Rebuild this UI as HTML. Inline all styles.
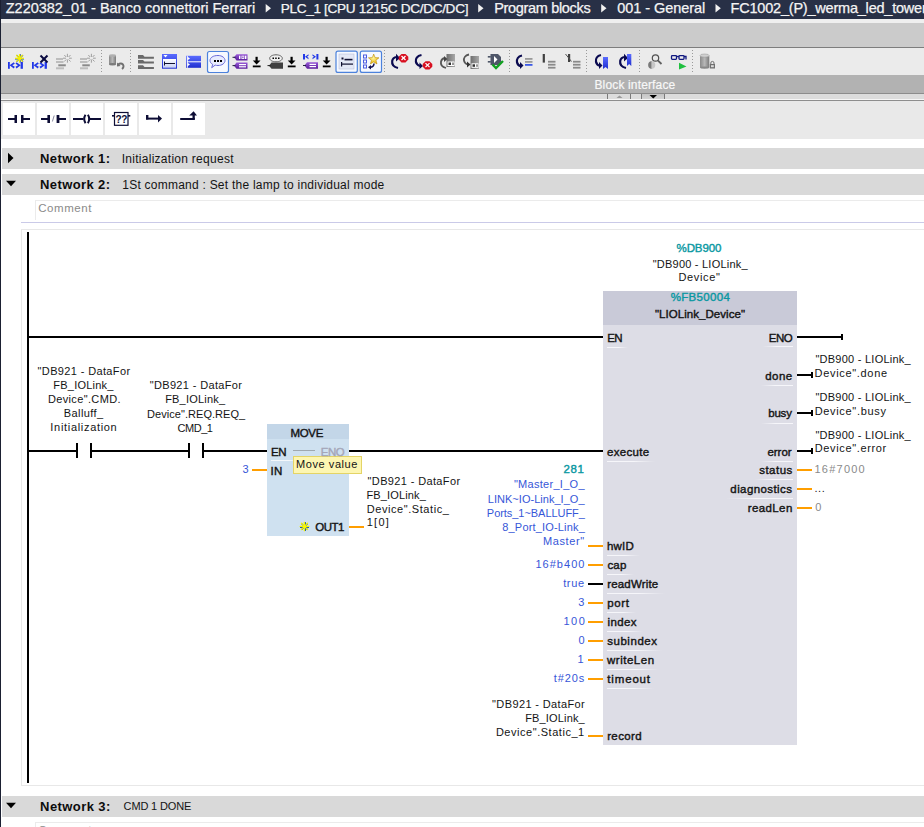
<!DOCTYPE html>
<html><head><meta charset="utf-8"><style>
html,body{margin:0;padding:0;width:924px;height:827px;overflow:hidden;background:#fff;position:relative}
*{box-sizing:border-box}
.t{position:absolute;white-space:pre;font-family:"Liberation Sans", sans-serif;line-height:normal}
.a{position:absolute}
</style></head><body>
<!-- backgrounds -->
<div class=a style="left:0;top:0;width:924px;height:19px;background:#283046"></div>
<div class=a style="left:0;top:19px;width:924px;height:4px;background:#efefef"></div>
<div class=a style="left:0;top:23px;width:924px;height:24px;background:#cbcbcb"></div>
<div class=a style="left:0;top:47px;width:924px;height:1px;background:#7d7d7d"></div>
<div class=a style="left:0;top:48px;width:924px;height:27px;background:#ebebeb"></div>
<div class=a style="left:0;top:75px;width:924px;height:18px;background:#b2b2b2"></div>
<div class=a style="left:0;top:93px;width:924px;height:1px;background:#8c8c8c"></div>
<div class=a style="left:0;top:94px;width:924px;height:5px;background:#dcdcdc"></div>
<div class=a style="left:0;top:99px;width:924px;height:1px;background:#f6f6f6"></div>
<div class=a style="left:0;top:100px;width:924px;height:1px;background:#8e8e8e"></div>
<div class=a style="left:0;top:101px;width:924px;height:38px;background:#e9e9e9"></div>
<!-- block interface tabs -->
<div class=a style="left:607px;top:94px;width:1px;height:5px;background:#7a7a7a"></div>
<div class=a style="left:630px;top:94px;width:1px;height:5px;background:#7a7a7a"></div>
<div class=a style="left:641px;top:94px;width:1px;height:5px;background:#7a7a7a"></div>
<div class=a style="left:664px;top:94px;width:1px;height:5px;background:#7a7a7a"></div>
<div class=a style="left:642px;top:94px;width:22px;height:5px;background:linear-gradient(#c4c4c4,#d4d4d4)"></div>
<svg class=a style="left:0;top:0" width="924" height="140">
 <polygon points="616.5,98 622.5,98 619.5,95.5" fill="#9a9a9a"/>
 <polygon points="649.5,95 657,95 653.25,98.5" fill="#000"/>
</svg>
<!-- ladder toolbar buttons -->
<div class=a style="left:3px;top:103px;width:32px;height:32px;background:#fff"></div>
<div class=a style="left:37px;top:103px;width:32px;height:32px;background:#fff"></div>
<div class=a style="left:71px;top:103px;width:32px;height:32px;background:#fff"></div>
<div class=a style="left:105px;top:103px;width:32px;height:32px;background:#fff"></div>
<div class=a style="left:139px;top:103px;width:32px;height:32px;background:#fff"></div>
<div class=a style="left:173px;top:103px;width:32px;height:32px;background:#fff"></div>
<!-- left dark border -->
<div class=a style="left:0;top:0;width:1px;height:827px;background:#1b2032"></div>
<!-- network headers -->
<div class=a style="left:2px;top:148px;width:922px;height:21px;background:#d9d9d9"></div>
<div class=a style="left:2px;top:174px;width:922px;height:21px;background:#d9d9d9"></div>
<div class=a style="left:2px;top:796px;width:922px;height:21px;background:#d9d9d9"></div>
<svg class=a style="left:0;top:140px" width="30" height="690">
 <polygon points="8,12.7 13.5,18 8,23.3" fill="#000"/>
 <polygon points="6,40.8 16,40.8 11,46.2" fill="#000"/>
 <polygon points="6,662.8 16,662.8 11,668.2" fill="#000"/>
</svg>
<!-- comment boxes -->
<div class=a style="left:35px;top:200px;width:889px;height:20px;border-left:1px solid #ebebeb;border-top:1px solid #ebebeb"></div>
<div class=a style="left:21px;top:222px;width:903px;height:1px;background:#cacae8"></div>
<div class=a style="left:35px;top:822px;width:889px;height:10px;border-left:1px solid #ebebeb;border-top:1px solid #ebebeb"></div>
<!-- ladder box -->
<div class=a style="left:21px;top:229px;width:910px;height:557px;border:1px solid #e8e8e8"></div>
<div class=a style="left:27px;top:232px;width:2px;height:551px;background:#000"></div>
<div class=a style="left:29px;top:336px;width:574px;height:2px;background:#000;"></div>
<div class=a style="left:29px;top:450px;width:47px;height:2px;background:#000;"></div>
<div class=a style="left:76px;top:443px;width:2px;height:15px;background:#000;"></div>
<div class=a style="left:90px;top:443px;width:2px;height:15px;background:#000;"></div>
<div class=a style="left:92px;top:450px;width:96px;height:2px;background:#000;"></div>
<div class=a style="left:188px;top:443px;width:2px;height:15px;background:#000;"></div>
<div class=a style="left:202px;top:443px;width:2px;height:15px;background:#000;"></div>
<div class=a style="left:204px;top:450px;width:63px;height:2px;background:#000;"></div>
<div class=a style="left:349px;top:450px;width:254px;height:2px;background:#000;"></div>
<div class=a style="left:267px;top:424px;width:82px;height:112px;background:#cfe1f0;"></div>
<div class=a style="left:267px;top:424px;width:82px;height:15px;background:#c3d6e8;"></div>
<div class=a style="left:293px;top:450px;width:22px;height:1px;background:#9ea8b0;"></div>
<div class=a style="left:271px;top:460px;width:30px;height:1px;background:linear-gradient(90deg,#f4f8fb,#f4f8fb 60%,rgba(244,248,251,0));"></div>
<div class=a style="left:252px;top:469px;width:15px;height:2px;background:#ff9e00;"></div>
<div class=a style="left:349px;top:526px;width:15px;height:2px;background:#ff9e00;"></div>
<svg class=a style="left:298px;top:520px" width="13" height="13" viewBox="298 520 13 13">
<g stroke="#0a4a9a" stroke-width="1.3">
<line x1="305.2" y1="522" x2="305.2" y2="531"/><line x1="300" y1="527.2" x2="309" y2="527.2"/>
<line x1="301.6" y1="523.6" x2="307.6" y2="529.6"/><line x1="307.6" y1="523.6" x2="301.6" y2="529.6"/></g>
<g stroke="#f4f400" stroke-width="1.3" stroke-linecap="round">
<line x1="304.4" y1="522.3" x2="304.4" y2="530.7"/><line x1="300.2" y1="526.4" x2="308.8" y2="526.4"/>
<line x1="301.4" y1="523.3" x2="303.5" y2="525.4"/><line x1="307.5" y1="523.3" x2="305.4" y2="525.4"/>
<line x1="301.4" y1="529.5" x2="303.5" y2="527.4"/><line x1="307.5" y1="529.5" x2="305.4" y2="527.4"/></g>
<circle cx="304.5" cy="526.5" r="1.8" fill="#f8f800"/></svg>
<div class=a style="left:293px;top:456px;width:69px;height:18px;background:#fdf6b2;border:1px solid #e4d466"></div>
<div class=a style="left:603px;top:291px;width:194px;height:454px;background:#dddde6;"></div>
<div class=a style="left:603px;top:291px;width:194px;height:34px;background:#c9cad8;"></div>
<div class=a style="left:797px;top:336px;width:46px;height:2px;background:#000;"></div>
<div class=a style="left:841px;top:334px;width:2px;height:6px;background:#000;"></div>
<div class=a style="left:797px;top:374px;width:15px;height:2px;background:#000;"></div>
<div class=a style="left:811px;top:372px;width:2px;height:6px;background:#000;"></div>
<div class=a style="left:797px;top:412px;width:15px;height:2px;background:#000;"></div>
<div class=a style="left:811px;top:410px;width:2px;height:6px;background:#000;"></div>
<div class=a style="left:797px;top:450px;width:15px;height:2px;background:#000;"></div>
<div class=a style="left:811px;top:448px;width:2px;height:6px;background:#000;"></div>
<div class=a style="left:797px;top:469px;width:15px;height:2px;background:#ff9e00;"></div>
<div class=a style="left:797px;top:488px;width:15px;height:2px;background:#ff9e00;"></div>
<div class=a style="left:797px;top:507px;width:15px;height:2px;background:#ff9e00;"></div>
<div class=a style="left:588px;top:545px;width:15px;height:2px;background:#ff9e00;"></div>
<div class=a style="left:588px;top:564px;width:15px;height:2px;background:#ff9e00;"></div>
<div class=a style="left:588px;top:602px;width:15px;height:2px;background:#ff9e00;"></div>
<div class=a style="left:588px;top:621px;width:15px;height:2px;background:#ff9e00;"></div>
<div class=a style="left:588px;top:640px;width:15px;height:2px;background:#ff9e00;"></div>
<div class=a style="left:588px;top:659px;width:15px;height:2px;background:#ff9e00;"></div>
<div class=a style="left:588px;top:678px;width:15px;height:2px;background:#ff9e00;"></div>
<div class=a style="left:588px;top:735px;width:15px;height:2px;background:#ff9e00;"></div>
<div class=a style="left:588px;top:583px;width:15px;height:2px;background:#000;"></div>
<div class=a style="left:607px;top:347px;width:21px;height:1px;background:linear-gradient(90deg,#f6f6fa,#f6f6fa 55%,rgba(246,246,250,0));"></div>
<div class=a style="left:607px;top:461px;width:48px;height:1px;background:linear-gradient(90deg,#f6f6fa,#f6f6fa 55%,rgba(246,246,250,0));"></div>
<div class=a style="left:607px;top:555px;width:33px;height:1px;background:linear-gradient(90deg,#f6f6fa,#f6f6fa 55%,rgba(246,246,250,0));"></div>
<div class=a style="left:607px;top:574px;width:27px;height:1px;background:linear-gradient(90deg,#f6f6fa,#f6f6fa 55%,rgba(246,246,250,0));"></div>
<div class=a style="left:607px;top:593px;width:58px;height:1px;background:linear-gradient(90deg,#f6f6fa,#f6f6fa 55%,rgba(246,246,250,0));"></div>
<div class=a style="left:607px;top:612px;width:29px;height:1px;background:linear-gradient(90deg,#f6f6fa,#f6f6fa 55%,rgba(246,246,250,0));"></div>
<div class=a style="left:607px;top:631px;width:36px;height:1px;background:linear-gradient(90deg,#f6f6fa,#f6f6fa 55%,rgba(246,246,250,0));"></div>
<div class=a style="left:607px;top:650px;width:55px;height:1px;background:linear-gradient(90deg,#f6f6fa,#f6f6fa 55%,rgba(246,246,250,0));"></div>
<div class=a style="left:607px;top:669px;width:52px;height:1px;background:linear-gradient(90deg,#f6f6fa,#f6f6fa 55%,rgba(246,246,250,0));"></div>
<div class=a style="left:607px;top:688px;width:47px;height:1px;background:linear-gradient(90deg,#f6f6fa,#f6f6fa 55%,rgba(246,246,250,0));"></div>
<div class=a style="left:763px;top:346px;width:30px;height:1px;background:linear-gradient(270deg,#f6f6fa,#f6f6fa 55%,rgba(246,246,250,0));"></div>
<div class=a style="left:761px;top:385px;width:32px;height:1px;background:linear-gradient(270deg,#f6f6fa,#f6f6fa 55%,rgba(246,246,250,0));"></div>
<div class=a style="left:761px;top:423px;width:32px;height:1px;background:linear-gradient(270deg,#f6f6fa,#f6f6fa 55%,rgba(246,246,250,0));"></div>
<div class=a style="left:761px;top:461px;width:32px;height:1px;background:linear-gradient(270deg,#f6f6fa,#f6f6fa 55%,rgba(246,246,250,0));"></div>
<div class=a style="left:755px;top:479px;width:38px;height:1px;background:linear-gradient(270deg,#f6f6fa,#f6f6fa 55%,rgba(246,246,250,0));"></div>
<div class=a style="left:726px;top:498px;width:67px;height:1px;background:linear-gradient(270deg,#f6f6fa,#f6f6fa 55%,rgba(246,246,250,0));"></div>
<svg class=a style="left:0;top:0" width="924" height="140" shape-rendering="geometricPrecision">
<defs>
 <linearGradient id="gb" x1="0" y1="0" x2="0" y2="1"><stop offset="0" stop-color="#5a6cff"/><stop offset="1" stop-color="#1f2ed0"/></linearGradient>
 <linearGradient id="gw" x1="0" y1="0" x2="0" y2="1"><stop offset="0" stop-color="#ffffff"/><stop offset="1" stop-color="#c8d0f4"/></linearGradient>
 <linearGradient id="gp" x1="0" y1="0" x2="0" y2="1"><stop offset="0" stop-color="#9a5ad8"/><stop offset="1" stop-color="#5a1c9c"/></linearGradient>
 <linearGradient id="gg" x1="0" y1="0" x2="1" y2="0"><stop offset="0" stop-color="#6e6e6e"/><stop offset="1" stop-color="#a8a8a8"/></linearGradient>
 <linearGradient id="gc" x1="0" y1="0" x2="1" y2="0"><stop offset="0" stop-color="#8a8a8a"/><stop offset=".5" stop-color="#b8b8b8"/><stop offset="1" stop-color="#7a7a7a"/></linearGradient>
 <radialGradient id="gs" cx=".45" cy=".4" r=".6"><stop offset="0" stop-color="#fff8a0"/><stop offset="1" stop-color="#e8b000"/></radialGradient>
</defs>
<!-- title arrows -->
<g fill="#f0f0f0">
 <polygon points="265.7,4 271,8.2 265.7,12.4"/>
 <polygon points="478.2,4 483.5,8.2 478.2,12.4"/>
 <polygon points="601.2,4 606.5,8.2 601.2,12.4"/>
 <polygon points="715.5,4 720.8,8.2 715.5,12.4"/>
</g>
<!-- separators -->
<g stroke="#9a9a9a" stroke-width="1" stroke-dasharray="1,2">
 <line x1="101.5" y1="50" x2="101.5" y2="73"/>
 <line x1="130.5" y1="50" x2="130.5" y2="73"/>
 <line x1="384.5" y1="50" x2="384.5" y2="73"/>
 <line x1="509.5" y1="50" x2="509.5" y2="73"/>
 <line x1="586.5" y1="50" x2="586.5" y2="73"/>
 <line x1="639.5" y1="50" x2="639.5" y2="73"/>
 <line x1="692.5" y1="50" x2="692.5" y2="73"/>
</g>
<!-- icon 1 & 2: network symbol -->
<g id="net" fill="#2238e8">
 <rect x="8" y="62" width="1.8" height="6.8"/><polygon points="9.6,65.3 13.8,62.2 14.8,63.8 12.3,65.3 14.8,66.8 13.8,68.4"/>
 <polygon points="20.7,65.3 16.5,62.2 15.5,63.8 18,65.3 15.5,66.8 16.5,68.4"/><rect x="20.6" y="62" width="2.3" height="6.8"/>
</g>
<use href="#net" x="24"/>
<g stroke="#1a4a9a" stroke-width="1.2"><line x1="20.1" y1="54" x2="20.1" y2="62.5"/><line x1="15" y1="58.9" x2="24" y2="58.9"/><line x1="16.6" y1="55.2" x2="23" y2="61.6"/><line x1="23" y1="55.2" x2="16.6" y2="61.6"/></g>
<g stroke="#f4f000" stroke-width="1.2"><line x1="19.5" y1="54" x2="19.5" y2="62.5"/><line x1="15" y1="58.3" x2="24" y2="58.3"/><line x1="16.3" y1="55" x2="18.3" y2="57"/><line x1="22.7" y1="55" x2="20.7" y2="57"/><line x1="16.3" y1="61.6" x2="18.3" y2="59.6"/><line x1="22.7" y1="61.6" x2="20.7" y2="59.6"/></g>
<circle cx="19.5" cy="58.3" r="2" fill="#f4f000"/>
<g stroke="#0a0a40" stroke-width="2"><line x1="40.5" y1="55.5" x2="47.5" y2="62.5"/><line x1="47.5" y1="55.5" x2="40.5" y2="62.5"/></g>
<!-- icon 3 & 4: gray bars + star -->
<g id="ic3">
 <rect x="56" y="58" width="7" height="2" fill="#bdbdbd"/><rect x="56" y="61" width="7.5" height="2" fill="#bdbdbd"/>
 <rect x="58.3" y="64.3" width="7.5" height="2" fill="#8a8a8a"/><rect x="56" y="67.3" width="8" height="2" fill="#bdbdbd"/>
 <g stroke="#a0a0a0" stroke-width="1"><line x1="67.4" y1="53.8" x2="67.4" y2="57"/><line x1="67.4" y1="59.5" x2="67.4" y2="62.7"/><line x1="63" y1="58.2" x2="66" y2="58.2"/><line x1="69" y1="58.2" x2="71.8" y2="58.2"/><line x1="64.3" y1="55" x2="66.2" y2="57"/><line x1="70.5" y1="55" x2="68.6" y2="57"/><line x1="64.3" y1="61.5" x2="66.2" y2="59.5"/><line x1="70.5" y1="61.5" x2="68.6" y2="59.5"/></g>
</g>
<use href="#ic3" x="24"/>
<!-- icon 5: cylinder + undo -->
<rect x="109" y="55.5" width="7" height="9" rx="1" fill="url(#gc)"/><ellipse cx="112.5" cy="55.6" rx="3.5" ry="1.4" fill="#b0b0b0"/><ellipse cx="112.5" cy="64.2" rx="3.5" ry="1.2" fill="#7a7a7a"/>
<path d="M118,64.5 Q121,62.5 123,64.5 Q124.5,67 122,69" stroke="#707070" stroke-width="1.8" fill="none"/><polygon points="117,62.5 117,66.5 120.5,66" fill="#707070"/>
<!-- icon 6: stacked tabs -->
<g fill="#6a6a6a">
 <path d="M138,55 h5 l1.5,1.7 h9.4 v2 h-15.9z"/><path d="M138,60.1 h5 l1.5,1.5 h9.4 v1.8 h-15.9z"/><path d="M138,65.2 h5 l1.5,1.7 h9.4 v2 h-15.9z"/>
</g>
<!-- icon 7: blue window -->
<rect x="162" y="54" width="15" height="14.7" fill="url(#gb)"/><rect x="163" y="59" width="13" height="8.7" fill="url(#gw)"/>
<polygon points="163.5,55 167.5,55 165.5,57.5" fill="#fff"/><rect x="164" y="63" width="11" height="1" fill="#101030"/><rect x="164" y="61.5" width="1" height="4" fill="#101030"/>
<!-- icon 8: blue bar -->
<rect x="186" y="55.8" width="15" height="12" fill="url(#gb)"/><rect x="187" y="61.3" width="14" height="1" fill="#ffffff"/>
<rect x="186.8" y="55.8" width="1" height="12" fill="#fff"/><polygon points="187.5,56.8 190,58.6 187.5,60.3" fill="#fff"/><polygon points="187.5,62.8 190,64.6 187.5,66.3" fill="#fff"/>
<!-- icon 9: framed speech -->
<rect x="207.5" y="51.5" width="21" height="21" rx="2" fill="#f6f9ff" stroke="#4c82dc" stroke-width="1.2"/>
<path d="M218,55.5 c4,0 7,2.2 7,5 c0,2.8 -3,5 -7,5 c-1,0 -2,-.1 -2.8,-.4 l-3.5,2.6 l1,-3.3 c-1.7,-.9 -2.7,-2.3 -2.7,-3.9 c0,-2.8 3,-5 8,-5z" fill="#e8ecff" stroke="#6a6ad8" stroke-width="1"/>
<g fill="#000"><rect x="214" y="60" width="2" height="2"/><rect x="217" y="60" width="2" height="2"/><rect x="220" y="60" width="2" height="2"/></g>
<!-- icon 10: purple tags -->
<g>
 <path d="M236.5,54.2 h11 v6.3 h-11 l-2.5,-3.15z" fill="url(#gp)"/><rect x="232.5" y="56.8" width="3" height="1" fill="#202040"/>
 <path d="M236.5,62.5 h11 v6.3 h-11 l-2.5,-3.15z" fill="url(#gp)"/><rect x="232.5" y="65.1" width="3" height="1" fill="#202040"/>
 <rect x="239" y="55.7" width="1.4" height="3.3" fill="#fff"/><rect x="241.5" y="55.7" width="2.8" height="3.3" fill="#fff"/><rect x="242.3" y="56.5" width="1.2" height="1.7" fill="#7a3cc0"/><rect x="245" y="55.7" width="1.4" height="3.3" fill="#fff"/>
 <rect x="239" y="64" width="7" height="1.2" fill="#fff"/><rect x="239" y="66.2" width="7" height="1.2" fill="#fff"/>
</g>
<g id="dl" fill="#000"><rect x="255.5" y="56.8" width="2.2" height="5"/><polygon points="252.8,60.5 260.5,60.5 256.6,64.5"/><rect x="252.8" y="65.5" width="7.8" height="1.8"/></g>
<!-- icon 11: speech + dark tag -->
<path d="M276,54.8 c3.5,0 6.3,1.5 6.3,3.5 c0,2 -2.8,3.5 -6.3,3.5 c-3.5,0 -6.3,-1.5 -6.3,-3.5 c0,-2 2.8,-3.5 6.3,-3.5z" fill="#f0f0f0" stroke="#606060" stroke-width="1"/>
<g fill="#000"><rect x="272.5" y="57.5" width="1.5" height="1.5"/><rect x="275.2" y="57.5" width="1.5" height="1.5"/><rect x="278" y="57.5" width="1.5" height="1.5"/></g>
<path d="M271.5,62.5 h11.5 v6.3 h-11.5 l-2.5,-3.15z" fill="#404040"/><rect x="267.5" y="65.1" width="3" height="1" fill="#202020"/>
<use href="#dl" x="35"/>
<!-- icon 12: net + purple tag -->
<g fill="#2238e8"><rect x="303" y="54" width="2" height="5.5"/><polygon points="305,56.8 308.5,54.3 308.5,55.8 307,56.8 308.5,57.8 308.5,59.3"/><polygon points="312.5,54.3 316,56.8 312.5,59.3 312.5,57.8 314,56.8 312.5,55.8"/><rect x="316.4" y="54" width="2" height="5.5"/></g>
<path d="M307,62.2 h11 v6.6 h-11 l-2.5,-3.3z" fill="url(#gp)"/><rect x="303" y="65" width="3" height="1" fill="#202040"/><rect x="309.5" y="63.8" width="6.5" height="1.2" fill="#fff"/><rect x="309.5" y="66" width="6.5" height="1.2" fill="#fff"/>
<use href="#dl" x="70"/>
<!-- icon 13: framed list -->
<rect x="336" y="51.2" width="21.3" height="21.2" rx="2" fill="#f6f9ff" stroke="#4c82dc" stroke-width="1.2"/>
<rect x="339" y="54" width="15" height="15" fill="#e4e8f6" stroke="#b8c0dc" stroke-width=".6"/>
<rect x="341.5" y="57.5" width="2" height="2" fill="#101030"/><rect x="344.5" y="58.8" width="8" height="1.6" fill="#101030"/>
<rect x="341" y="63.5" width="12" height="1.2" fill="#101030"/><rect x="341" y="62" width="1.2" height="4.5" fill="#101030"/>
<!-- icon 14: framed star list -->
<rect x="360.3" y="51.2" width="21.2" height="21.2" rx="2" fill="#f6f9ff" stroke="#4c82dc" stroke-width="1.2"/>
<g fill="none" stroke="#4a5ae0" stroke-width="1"><rect x="363.5" y="55" width="3" height="3"/><rect x="363.5" y="60" width="3" height="3"/><rect x="363.5" y="65" width="3" height="3"/></g>
<polygon points="373.7,54 375.1,57.6 379,57.8 376,60.2 377,64 373.7,61.9 370.4,64 371.4,60.2 368.4,57.8 372.3,57.6" fill="url(#gs)" stroke="#b08000" stroke-width=".5"/>
<path d="M374,63.5 q0,3.5 -4,3.8" stroke="#101050" stroke-width="1.5" fill="none"/><polygon points="368,67.3 371,65 371,69.5" fill="#101050"/>
<!-- icon 15/16: navy arcs + red octagon -->
<path d="M398,68 c-4.5,-1 -6.2,-4 -5.8,-7 c.4,-2.5 2.5,-3.8 4.5,-4" stroke="#0a0a50" stroke-width="2.2" fill="none"/><polygon points="396,53.8 400,58 396,61.5" fill="#0a0a50"/>
<path d="M401.5,54 h4 l2.8,2.8 v2.8 l-2.8,2.8 h-4 l-2.8,-2.8 v-2.8z" fill="#d81020"/><g stroke="#fff" stroke-width="1.2"><line x1="401.5" y1="56" x2="405.5" y2="60"/><line x1="405.5" y1="56" x2="401.5" y2="60"/></g>
<path d="M421.5,55 c-4.5,.8 -6.2,4 -5.6,6.8 c.4,2 2,3.5 4.2,4.2" stroke="#0a0a50" stroke-width="2.2" fill="none"/><polygon points="419.5,62.5 423,66 419.5,69" fill="#0a0a50"/>
<path d="M425.5,61.2 h4 l2.8,2.8 v2.8 l-2.8,2.8 h-4 l-2.8,-2.8 v-2.8z" fill="#d81020"/><g stroke="#fff" stroke-width="1.2"><line x1="425.5" y1="63.2" x2="429.5" y2="67.2"/><line x1="429.5" y1="63.2" x2="425.5" y2="67.2"/></g>
<!-- icon 17/18: gray arc + chip -->
<rect x="446.5" y="54" width="8.5" height="13" fill="url(#gg)"/><rect x="447.5" y="61.5" width="7" height="4.5" fill="#fff"/><rect x="448.5" y="62.5" width="2.5" height="2.5" fill="#303030"/><rect x="452.5" y="62.5" width="1" height="2.5" fill="#303030"/>
<path d="M446,68 c-4,-1 -5.5,-3.6 -5,-6.4 c.4,-2 2,-3.3 3.8,-3.6" stroke="#555" stroke-width="1.8" fill="none"/><polygon points="444,56 447.5,59 444,62" fill="#444"/>
<rect x="470.5" y="56" width="8.5" height="13" fill="url(#gg)"/><rect x="471.5" y="63.3" width="7" height="4.5" fill="#fff"/><rect x="472.5" y="64.3" width="2.5" height="2.5" fill="#303030"/><rect x="476.5" y="64.3" width="1" height="2.5" fill="#303030"/>
<path d="M469,54.5 c-4,.8 -5.5,3.6 -5,6.2 c.4,2 1.7,3.2 3.5,3.8" stroke="#555" stroke-width="1.8" fill="none"/><polygon points="467,61.5 470.5,64.5 467,67.5" fill="#333"/>
<!-- icon 19: plug + check -->
<path d="M490.5,54 h7.5 l3,3 v5 l-3,3 h-7.5z" fill="#4e5668"/><rect x="487.8" y="56" width="3" height="1.6" fill="#4e5668"/><rect x="487.8" y="61" width="3" height="1.6" fill="#4e5668"/>
<polygon points="494,56 497.5,59.5 494,63" fill="#fff"/>
<path d="M492.5,64.5 l3.5,3.5 l7,-7" stroke="#10a020" stroke-width="2.4" fill="none"/>
<!-- icon 20: navy arc + lines -->
<path d="M522,55.5 c-4,.8 -5.5,4 -5,6.8 c.4,2 2,3.5 4,4" stroke="#0a0a50" stroke-width="2.2" fill="none"/><polygon points="520,62 523.5,65.5 520,69" fill="#0a0a50"/>
<rect x="525" y="58" width="7.5" height="1.8" fill="#9a9a9a"/><rect x="525" y="61" width="7.5" height="1.8" fill="#9a9a9a"/><rect x="525" y="64" width="7.5" height="1.8" fill="#3c5ae8"/>
<!-- icon 21/22 -->
<rect x="542.7" y="54" width="2.2" height="8.6" fill="#404040"/>
<g fill="#8a8a8a"><rect x="548" y="60.8" width="7.5" height="1.8"/><rect x="548" y="63.8" width="7.5" height="1.8"/><rect x="548" y="66.8" width="7.5" height="1.8"/></g>
<rect x="568" y="54" width="2.2" height="8" fill="#404040"/><line x1="565.5" y1="54" x2="571.5" y2="61.5" stroke="#555" stroke-width="1"/>
<g fill="#8a8a8a"><rect x="573" y="60.8" width="7.5" height="1.8"/><rect x="573" y="63.8" width="7.5" height="1.8"/><rect x="573" y="66.8" width="7.5" height="1.8"/></g>
<!-- icon 23/24 -->
<path d="M601,55 c-4,.8 -5.5,4 -5,6.8 c.4,2 2,3.5 4,4" stroke="#0a0a50" stroke-width="2.2" fill="none"/><polygon points="599,62 602.5,65.5 599,69" fill="#0a0a50"/>
<path d="M603,57 h5 v12 l-2.5,-2 l-2.5,2z" fill="url(#gb)"/>
<path d="M626,68 c-4.5,-1 -6.2,-4 -5.8,-7 c.4,-2.5 2.5,-3.8 4.5,-4" stroke="#0a0a50" stroke-width="2.2" fill="none"/><polygon points="624,53.8 628,58 624,61.5" fill="#0a0a50"/>
<path d="M627,54 h4.3 v12 l-2.15,-2 l-2.15,2z" fill="url(#gb)"/>
<!-- icon 25 magnifier -->
<path d="M651.7,61 a4.6,4.1 0 0 0 0,8 z" fill="#7a7a7a"/><path d="M651.7,61 a4.6,4.1 0 0 1 0,8 z" fill="#c8c8c8"/>
<circle cx="655.5" cy="58" r="3.2" fill="#e8e8e8" stroke="#505050" stroke-width="1.2"/><line x1="657.8" y1="60.4" x2="661.5" y2="64" stroke="#606060" stroke-width="1.8"/>
<!-- icon 26 glasses + play -->
<g fill="none" stroke="#101880" stroke-width="1.3"><rect x="671.5" y="55.7" width="5" height="3.7" rx=".8"/><rect x="679" y="55.7" width="5" height="3.7" rx=".8"/><line x1="676.5" y1="56.5" x2="679" y2="56.5"/><path d="M684,56.5 h2 v3"/></g>
<polygon points="679,62.8 686.5,66.5 679,69.4" fill="#20c040"/>
<!-- icon 27 cylinder + lock -->
<rect x="700" y="55.5" width="9.3" height="12.5" rx="1" fill="url(#gc)"/><ellipse cx="704.6" cy="55.6" rx="4.6" ry="1.6" fill="#d0d0d0" stroke="#909090" stroke-width=".5"/><ellipse cx="704.6" cy="67.6" rx="4.6" ry="1.2" fill="#888"/>
<rect x="709.8" y="64" width="5.2" height="4.5" fill="#707070"/><path d="M710.8,64 v-1 a1.6,1.6 0 0 1 3.2,0 v1" stroke="#707070" stroke-width="1" fill="none"/><rect x="711" y="65.2" width="2.8" height="2" fill="#ddd"/>
<!-- ladder toolbar icons -->
<g fill="#0d0d35">
 <rect x="8" y="118" width="8" height="2"/><rect x="14.5" y="115" width="2.5" height="8"/><rect x="21" y="115" width="2.5" height="8"/><rect x="23" y="118" width="7" height="2"/>
 <rect x="41" y="118" width="7" height="2"/><rect x="47.4" y="115" width="2.6" height="8"/><rect x="56.6" y="115" width="2.8" height="8"/><rect x="59" y="118" width="7" height="2"/>
 <rect x="73" y="118" width="10.5" height="2"/><rect x="89.8" y="118" width="11.2" height="2"/>
 <rect x="114.5" y="112.5" width="13.5" height="12.8" fill="none" stroke="#0d0d35" stroke-width="1.2"/><rect x="112" y="115" width="2.5" height="1.6"/><rect x="128" y="115" width="2.3" height="1.6"/>
 <rect x="146" y="115" width="2.4" height="4.5"/><rect x="146" y="117.6" width="13" height="2"/><polygon points="158,115 162,118.6 158,122.6"/>
 <rect x="180.2" y="118" width="14.6" height="2"/><rect x="192.5" y="114.5" width="2.3" height="5"/><polygon points="189.2,115.6 193.6,111.2 197,115.6"/>
</g>
<path d="M85.5,114.8 q-2.6,4.2 0,8.4" stroke="#0d0d35" stroke-width="2" fill="none"/><path d="M87.9,114.8 q2.6,4.2 0,8.4" stroke="#0d0d35" stroke-width="2" fill="none"/>
<line x1="54.2" y1="115.5" x2="52.4" y2="121.5" stroke="#8a8aa0" stroke-width="1"/>
<text x="121.3" y="122.8" font-family="Liberation Sans" font-size="10" font-weight="700" text-anchor="middle" fill="#0d0d35" letter-spacing="-0.3">??</text>
</svg>

<div class=t style='left:5.75px;top:-0.12px;font-size:14.5px;color:#f4f4f4;letter-spacing:-0.014px;-webkit-text-stroke:0.25px #f4f4f4;'>Z220382_01 - Banco connettori Ferrari</div>
<div class=t style='left:280.65px;top:0.69px;font-size:13.6px;color:#f4f4f4;letter-spacing:-0.316px;-webkit-text-stroke:0.25px #f4f4f4;'>PLC_1 [CPU 1215C DC/DC/DC]</div>
<div class=t style='left:494.20px;top:-0.12px;font-size:14.5px;color:#f4f4f4;letter-spacing:-0.323px;-webkit-text-stroke:0.25px #f4f4f4;'>Program blocks</div>
<div class=t style='left:617.35px;top:-0.12px;font-size:14.5px;color:#f4f4f4;letter-spacing:-0.058px;-webkit-text-stroke:0.25px #f4f4f4;'>001 - General</div>
<div class=t style='left:730.60px;top:-0.12px;font-size:14.5px;color:#f4f4f4;letter-spacing:-0.211px;-webkit-text-stroke:0.25px #f4f4f4;'>FC1002_(P)_werma_led_tower_lamp</div>
<div class=t style='left:594.45px;top:77.74px;font-size:12px;color:#f8f8f8;letter-spacing:0.15px;-webkit-text-stroke:0.2px #f8f8f8;'>Block interface</div>
<div class=t style='left:40.00px;top:151.24px;font-size:13px;color:#0c0c0c;letter-spacing:0.4px;font-weight:700;'>Network 1:</div>
<div class=t style='left:40.00px;top:177.24px;font-size:13px;color:#0c0c0c;letter-spacing:0.4px;font-weight:700;'>Network 2:</div>
<div class=t style='left:40.10px;top:799.24px;font-size:13px;color:#0c0c0c;letter-spacing:0.422px;font-weight:700;'>Network 3:</div>
<div class=t style='left:121.75px;top:152.14px;font-size:12px;color:#141414;letter-spacing:0.271px;'>Initialization request</div>
<div class=t style='left:122.25px;top:178.14px;font-size:12px;color:#141414;letter-spacing:0.239px;'>1St command : Set the lamp to individual mode</div>
<div class=t style='left:123.60px;top:800.34px;font-size:11px;color:#141414;letter-spacing:-0.156px;'>CMD 1 DONE</div>
<div class=t style='left:38.15px;top:201.89px;font-size:11.5px;color:#8a8a8a;letter-spacing:0.583px;'>Comment</div>
<div class=t style='left:38.15px;top:823.89px;font-size:11.5px;color:#8a8a8a;letter-spacing:0.583px;'>Comment</div>
<div class=t style='left:37.60px;top:365.05px;font-size:11px;color:#141414;letter-spacing:0.36px;'>&quot;DB921 - DataFor</div>
<div class=t style='left:53.35px;top:379.05px;font-size:11px;color:#141414;letter-spacing:0.211px;'>FB_IOLink_</div>
<div class=t style='left:47.95px;top:393.05px;font-size:11px;color:#141414;letter-spacing:0.355px;'>Device&quot;.CMD.</div>
<div class=t style='left:63.85px;top:407.05px;font-size:11px;color:#141414;letter-spacing:0.386px;'>Balluff_</div>
<div class=t style='left:50.35px;top:421.05px;font-size:11px;color:#141414;letter-spacing:0.685px;'>Initialization</div>
<div class=t style='left:149.65px;top:379.35px;font-size:11px;color:#141414;letter-spacing:0.353px;'>&quot;DB921 - DataFor</div>
<div class=t style='left:165.15px;top:393.35px;font-size:11px;color:#141414;letter-spacing:0.211px;'>FB_IOLink_</div>
<div class=t style='left:147.05px;top:407.55px;font-size:11px;color:#141414;letter-spacing:0.047px;'>Device&quot;.REQ.REQ_</div>
<div class=t style='left:177.45px;top:421.55px;font-size:11px;color:#141414;letter-spacing:-0.45px;'>CMD_1</div>
<div class=t style='left:290.50px;top:426.59px;font-size:11.5px;color:#141414;letter-spacing:-0.333px;-webkit-text-stroke:0.4px #141414;'>MOVE</div>
<div class=t style='left:271.10px;top:445.59px;font-size:11.5px;color:#141414;letter-spacing:-0.45px;-webkit-text-stroke:0.4px #141414;'>EN</div>
<div class=t style='left:320.80px;top:445.59px;font-size:11.5px;color:#a4a6b8;letter-spacing:-0.45px;-webkit-text-stroke:0.4px #a4a6b8;'>ENO</div>
<div class=t style='left:270.45px;top:464.59px;font-size:11.5px;color:#141414;letter-spacing:0.3px;-webkit-text-stroke:0.4px #141414;'>IN</div>
<div class=t style='left:315.20px;top:521.09px;font-size:11.5px;color:#141414;letter-spacing:-0.45px;-webkit-text-stroke:0.4px #141414;'>OUT1</div>
<div class=t style='left:242.50px;top:463.05px;font-size:11px;color:#3656d8;'>3</div>
<div class=t style='left:367.60px;top:474.55px;font-size:11px;color:#141414;letter-spacing:0.36px;'>&quot;DB921 - DataFor</div>
<div class=t style='left:366.40px;top:488.55px;font-size:11px;color:#141414;letter-spacing:0.156px;'>FB_IOLink_</div>
<div class=t style='left:366.70px;top:502.55px;font-size:11px;color:#141414;letter-spacing:0.571px;'>Device&quot;.Static_</div>
<div class=t style='left:366.65px;top:516.34px;font-size:11px;color:#141414;letter-spacing:1.3px;'>1[0]</div>
<div class=t style='left:296.05px;top:458.05px;font-size:11px;color:#141414;letter-spacing:0.567px;'>Move value</div>
<div class=t style='left:676.50px;top:242.09px;font-size:11.5px;color:#0a98a2;letter-spacing:-0.08px;-webkit-text-stroke:0.4px #0a98a2;'>%DB900</div>
<div class=t style='left:652.70px;top:257.55px;font-size:11px;color:#141414;letter-spacing:0.225px;'>&quot;DB900 - LIOLink_</div>
<div class=t style='left:678.45px;top:271.05px;font-size:11px;color:#141414;letter-spacing:0.65px;'>Device&quot;</div>
<div class=t style='left:670.70px;top:291.29px;font-size:11.5px;color:#0a98a2;letter-spacing:0.314px;-webkit-text-stroke:0.4px #0a98a2;'>%FB50004</div>
<div class=t style='left:654.95px;top:308.19px;font-size:11.5px;color:#141414;letter-spacing:0.047px;-webkit-text-stroke:0.4px #141414;'>&quot;LIOLink_Device&quot;</div>
<div class=t style='left:607.15px;top:331.59px;font-size:11.5px;color:#141414;letter-spacing:-0.45px;-webkit-text-stroke:0.4px #141414;'>EN</div>
<div class=t style='left:607.10px;top:445.59px;font-size:11.5px;color:#141414;letter-spacing:0.3px;-webkit-text-stroke:0.4px #141414;'>execute</div>
<div class=t style='left:607.00px;top:540.09px;font-size:11.5px;color:#141414;letter-spacing:0.2px;-webkit-text-stroke:0.4px #141414;'>hwID</div>
<div class=t style='left:607.40px;top:559.09px;font-size:11.5px;color:#141414;letter-spacing:0.2px;-webkit-text-stroke:0.4px #141414;'>cap</div>
<div class=t style='left:607.30px;top:578.09px;font-size:11.5px;color:#141414;letter-spacing:0.15px;-webkit-text-stroke:0.4px #141414;'>readWrite</div>
<div class=t style='left:607.20px;top:597.09px;font-size:11.5px;color:#141414;letter-spacing:0.667px;-webkit-text-stroke:0.4px #141414;'>port</div>
<div class=t style='left:607.50px;top:616.09px;font-size:11.5px;color:#141414;letter-spacing:0.4px;-webkit-text-stroke:0.4px #141414;'>index</div>
<div class=t style='left:607.15px;top:635.09px;font-size:11.5px;color:#141414;letter-spacing:0.557px;-webkit-text-stroke:0.4px #141414;'>subindex</div>
<div class=t style='left:607.00px;top:654.09px;font-size:11.5px;color:#141414;letter-spacing:0.514px;-webkit-text-stroke:0.4px #141414;'>writeLen</div>
<div class=t style='left:607.25px;top:673.09px;font-size:11.5px;color:#141414;letter-spacing:0.85px;-webkit-text-stroke:0.4px #141414;'>timeout</div>
<div class=t style='left:607.15px;top:730.09px;font-size:11.5px;color:#141414;letter-spacing:0.38px;-webkit-text-stroke:0.4px #141414;'>record</div>
<div class=t style='left:768.70px;top:331.59px;font-size:11.5px;color:#141414;letter-spacing:-0.45px;-webkit-text-stroke:0.4px #141414;'>ENO</div>
<div class=t style='left:765.20px;top:369.59px;font-size:11.5px;color:#141414;letter-spacing:0.467px;-webkit-text-stroke:0.4px #141414;'>done</div>
<div class=t style='left:768.20px;top:407.39px;font-size:11.5px;color:#141414;letter-spacing:-0.2px;-webkit-text-stroke:0.4px #141414;'>busy</div>
<div class=t style='left:767.40px;top:445.59px;font-size:11.5px;color:#141414;-webkit-text-stroke:0.4px #141414;'>error</div>
<div class=t style='left:759.15px;top:464.09px;font-size:11.5px;color:#141414;letter-spacing:0.5px;-webkit-text-stroke:0.4px #141414;'>status</div>
<div class=t style='left:730.35px;top:483.09px;font-size:11.5px;color:#141414;letter-spacing:0.41px;-webkit-text-stroke:0.4px #141414;'>diagnostics</div>
<div class=t style='left:747.70px;top:502.09px;font-size:11.5px;color:#141414;letter-spacing:0.4px;-webkit-text-stroke:0.4px #141414;'>readLen</div>
<div class=t style='left:563.45px;top:463.29px;font-size:11.5px;color:#0a98a2;letter-spacing:0.65px;-webkit-text-stroke:0.4px #0a98a2;'>281</div>
<div class=t style='left:513.95px;top:478.35px;font-size:11px;color:#3656d8;letter-spacing:0.282px;'>&quot;Master_I_O_</div>
<div class=t style='left:487.80px;top:492.55px;font-size:11px;color:#3656d8;letter-spacing:0.025px;'>LINK~IO-Link_I_O_</div>
<div class=t style='left:486.85px;top:506.65px;font-size:11px;color:#3656d8;letter-spacing:-0.047px;'>Ports_1~BALLUFF_</div>
<div class=t style='left:502.30px;top:520.64px;font-size:11px;color:#3656d8;letter-spacing:0.171px;'>8_Port_IO-Link_</div>
<div class=t style='left:543.05px;top:534.54px;font-size:11px;color:#3656d8;letter-spacing:0.583px;'>Master&quot;</div>
<div class=t style='left:535.40px;top:557.75px;font-size:11px;color:#3656d8;letter-spacing:1.033px;'>16#b400</div>
<div class=t style='left:563.15px;top:576.64px;font-size:11px;color:#3656d8;letter-spacing:0.633px;'>true</div>
<div class=t style='left:578.30px;top:595.64px;font-size:11px;color:#3656d8;'>3</div>
<div class=t style='left:563.50px;top:614.75px;font-size:11px;color:#3656d8;letter-spacing:1.5px;'>100</div>
<div class=t style='left:578.50px;top:633.75px;font-size:11px;color:#3656d8;'>0</div>
<div class=t style='left:577.60px;top:652.75px;font-size:11px;color:#3656d8;'>1</div>
<div class=t style='left:553.75px;top:671.84px;font-size:11px;color:#3656d8;letter-spacing:0.925px;'>t#20s</div>
<div class=t style='left:492.10px;top:698.34px;font-size:11px;color:#141414;letter-spacing:0.373px;'>&quot;DB921 - DataFor</div>
<div class=t style='left:525.20px;top:712.34px;font-size:11px;color:#141414;letter-spacing:0.156px;'>FB_IOLink_</div>
<div class=t style='left:495.90px;top:726.34px;font-size:11px;color:#141414;letter-spacing:0.533px;'>Device&quot;.Static_1</div>
<div class=t style='left:815.40px;top:352.65px;font-size:11px;color:#141414;letter-spacing:0.25px;'>&quot;DB900 - LIOLink_</div>
<div class=t style='left:814.60px;top:366.65px;font-size:11px;color:#141414;letter-spacing:0.673px;'>Device&quot;.done</div>
<div class=t style='left:815.40px;top:390.65px;font-size:11px;color:#141414;letter-spacing:0.25px;'>&quot;DB900 - LIOLink_</div>
<div class=t style='left:814.65px;top:404.55px;font-size:11px;color:#141414;letter-spacing:0.682px;'>Device&quot;.busy</div>
<div class=t style='left:815.40px;top:428.65px;font-size:11px;color:#141414;letter-spacing:0.25px;'>&quot;DB900 - LIOLink_</div>
<div class=t style='left:814.75px;top:442.45px;font-size:11px;color:#141414;letter-spacing:0.642px;'>Device&quot;.error</div>
<div class=t style='left:814.50px;top:463.05px;font-size:11px;color:#8a8a8a;letter-spacing:1.233px;'>16#7000</div>
<div class=t style='left:814.40px;top:482.35px;font-size:11px;color:#202020;letter-spacing:0.6px;'>...</div>
<div class=t style='left:815.35px;top:500.85px;font-size:11px;color:#8a8a8a;'>0</div>
</body></html>
